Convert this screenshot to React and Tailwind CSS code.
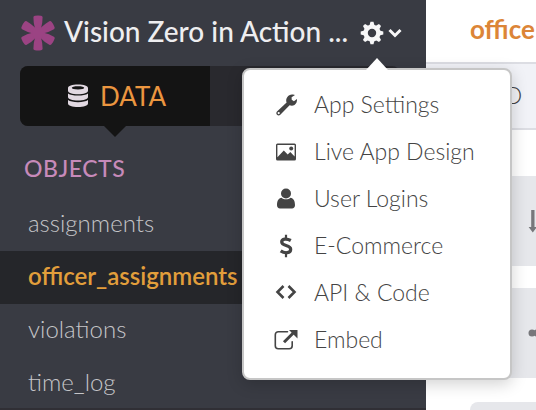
import React from 'react';

const menuItems = [
  { label: 'App Settings', Icon: WrenchIcon },
  { label: 'Live App Design', Icon: PhotoIcon },
  { label: 'User Logins', Icon: UserIcon },
  { label: 'E-Commerce', Icon: DollarIcon },
  { label: 'API & Code', Icon: CodeIcon },
  { label: 'Embed', Icon: EmbedIcon },
];

const objects = ['assignments', 'officer_assignments', 'violations', 'time_log'];

function WrenchIcon() {
  return (
    <svg viewBox="0 0 24 24" className="size-6" fill="currentColor" aria-hidden="true">
      <path fillRule="evenodd" d="M18 1.500c1.300-.2 2.200 0 3 .5l-3.400 2.300.1 2.500 2.200 1.400L23 6.100c.2 2.600-.6 4.700-2.500 5.900-1.600 1-3.300 1-4.900.3L6.300 21.800c-1 .9-2.400.9-3.300 0s-.9-2.300 0-3.300l9.600-9c-.7-1.800-.5-3.700.6-5.300C14.400 2.500 16 1.700 18 1.500zM4.700 19a1.100 1.100 0 1 0 0 2.200 1.100 1.100 0 0 0 0-2.200z" />
    </svg>
  );
}

function PhotoIcon() {
  return (
    <svg viewBox="0 0 24 24" className="size-6" fill="currentColor" aria-hidden="true">
      <path fillRule="evenodd" d="M3.500 3.500h17A1.500 1.500 0 0 1 22 5v14a1.500 1.500 0 0 1-1.500 1.500h-17A1.500 1.500 0 0 1 2 19V5A1.500 1.500 0 0 1 3.500 3.500zM3.400 5v12.300l6.400-6.800 3.900 4.100 2.600-2.600 4.300 4.500V5z" />
      <circle cx="17.200" cy="8.500" r="2" />
    </svg>
  );
}

function UserIcon() {
  return (
    <svg viewBox="0 0 24 24" className="size-6" fill="currentColor" aria-hidden="true">
      <circle cx="12" cy="6.500" r="5" />
      <path d="M7.500 10.800C4.500 11.300 3 14 3 18.300 3 20.300 4.200 21.500 6 21.500h12c1.800 0 3-1.200 3-3.200 0-4.300-1.500-7-4.500-7.500-1.300 1-2.800 1.500-4.500 1.500s-3.200-.5-4.500-1.500z" />
    </svg>
  );
}

function DollarIcon() {
  return (
    <svg viewBox="0 0 24 24" className="size-6" fill="none" stroke="currentColor" strokeWidth="3.200" aria-hidden="true">
      <path d="M16.800 6.500C12.500 4.100 7.700 4.700 7.700 8c0 4.500 9 2.500 9 7.200 0 4-5.700 4.700-10 1.700" />
      <path strokeWidth="2.200" d="M12 .7V6M12 17.500v5.700" />
    </svg>
  );
}

function CodeIcon() {
  return (
    <svg viewBox="0 0 24 24" className="size-6" fill="none" stroke="currentColor" strokeWidth="2.600" aria-hidden="true">
      <path d="m9.500 5-6 6 6 6M14.500 5l6 6-6 6" />
    </svg>
  );
}

function EmbedIcon() {
  return (
    <svg viewBox="0 0 24 24" className="size-6" fill="none" stroke="currentColor" aria-hidden="true">
      <path strokeWidth="1.600" strokeLinecap="round" d="M13.500 3.700H4.300A3 3 0 0 0 1.300 6.700v11a3 3 0 0 0 3 3h10.900a3 3 0 0 0 3-3v-4" />
      <path strokeWidth="3" d="m10 14.300 9-9" />
      <path fill="currentColor" stroke="none" d="M15 2h8.500v8.600z" />
    </svg>
  );
}

function AsteriskLogo() {
  return (
    <svg viewBox="0 0 34 36" className="h-9 w-[34px] shrink-0" fill="#9b4383" aria-hidden="true">
      {[0, 60, 120, 180, 240, 300].map((angle) => (
        <path key={angle} transform={`rotate(${angle} 17 18)`} d="M12.400 2.300Q12.400.9 14 .7q3-.6 6 0 1.600.2 1.600 1.600 0 5.700-1.500 10.700L17 19l-3.100-6Q12.400 8 12.400 2.300z" />
      ))}
      <circle cx="17" cy="18" r="6" />
    </svg>
  );
}

function GearIcon() {
  return (
    <svg viewBox="0 0 24 24" className="size-6" fill="#f7f7f8" aria-hidden="true">
      {[0, 45, 90, 135, 180, 225, 270, 315].map((angle) => (
        <path key={angle} transform={`rotate(${angle} 12 12)`} d="M10.500.7h3l1.300 4.800H9.200z" />
      ))}
      <path fillRule="evenodd" d="M12 3.400a8.600 8.600 0 1 1 0 17.200 8.600 8.600 0 0 1 0-17.200zm0 4.400a4.200 4.200 0 1 0 0 8.400 4.200 4.200 0 0 0 0-8.400z" />
    </svg>
  );
}

function DatabaseIcon() {
  return (
    <svg viewBox="0 0 20 24" className="h-6 w-5" fill="#e2d9e2" aria-hidden="true">
      <path fillRule="evenodd" d="M10 .5c5.800 0 10 1.500 10 3.500v2.700c0 2-4.200 3.500-10 3.500S0 8.700 0 6.700V4C0 2 4.200.5 10 .5zm0 1.700c-3.900 0-6.200.7-6.200 1.600S6.100 5.400 10 5.400s6.200-.7 6.200-1.600S13.900 2.200 10 2.200z" />
      <path d="M0 9.400c2 1.400 5.600 2.200 10 2.200s8-.8 10-2.200v3.700c0 2-4.200 3.500-10 3.500S0 15.100 0 13.100z" />
      <path d="M0 16c2 1.400 5.600 2.200 10 2.200s8-.8 10-2.200v3.500c0 2.100-4.200 3.600-10 3.600S0 21.600 0 19.500z" />
    </svg>
  );
}

function SettingsMenu() {
  return (
    <div className="absolute top-[68px] left-[242px] z-10 w-[270px] rounded-lg border-2 border-[#c6c6c6] bg-white pt-[11px] pb-[15px] shadow-[0_4px_16px_rgba(0,0,0,0.18)]">
      <svg viewBox="0 0 22 12" className="absolute -top-[12px] left-[122px] h-3 w-[22px]" aria-hidden="true">
        <path d="M0 12 11 0l11 12z" fill="#fff" />
      </svg>
      <ul>
        {menuItems.map(({ label, Icon }) => (
          <li key={label}>
            <button className="flex h-[47px] w-full items-center gap-4 pl-[30px] text-left text-[23px] font-light text-[#444]">
              <Icon />
              {label}
            </button>
          </li>
        ))}
      </ul>
    </div>
  );
}

function Sidebar() {
  return (
    <aside className="relative w-[426px] shrink-0 border-b-2 border-[#302f35] bg-[#393b43]">
      <header className="flex h-[66px] items-center pl-[21px]">
        <AsteriskLogo />
        <h1 className="ml-[9px] pb-1 text-[28px] font-medium whitespace-nowrap text-[#eeeef0]">Vision Zero in Action ...</h1>
        <button aria-label="App menu" className="ml-3 flex items-center gap-1">
          <GearIcon />
          <svg viewBox="0 0 14 10" className="h-[10px] w-[14px]" fill="none" stroke="#f7f7f8" strokeWidth="3" aria-hidden="true">
            <path d="m1.500 2 5.500 5.500L12.500 2" />
          </svg>
        </button>
      </header>
      <nav className="ml-5 flex h-[60px] w-[380px] rounded-lg bg-[#29292e]">
        <button className="relative flex w-[190px] items-center justify-center gap-3 rounded-l-lg bg-[#141414] pl-1 text-[26px] text-[#eb9640]">
          <DatabaseIcon />
          DATA
          <svg viewBox="0 0 22 11" className="absolute top-full left-[84px] h-[11px] w-[22px]" aria-hidden="true">
            <path d="M0 0h22L11 11z" fill="#141414" />
          </svg>
        </button>
      </nav>
      <h2 className="mt-6 pl-6 text-[23px] leading-9 font-medium tracking-wide text-[#c78aba]">OBJECTS</h2>
      <ul className="mt-3">
        {objects.map((name) => (
          <li key={name}>
            <a
              href="#"
              className={
                name === 'officer_assignments'
                  ? 'flex h-[53px] items-center bg-[#25262a] pb-1 pl-7 text-2xl font-semibold text-[#e29e3b]'
                  : 'flex h-[53px] items-center pb-1 pl-7 text-2xl font-light text-[#c5c5c8]'
              }
            >
              {name}
            </a>
          </li>
        ))}
      </ul>
    </aside>
  );
}

function MainPanel() {
  return (
    <main className="min-w-0 flex-1 overflow-hidden bg-white">
      <h2 className="flex h-16 items-center border-b-2 border-[#dcdde3] pb-1 pl-11 text-[26px] font-bold whitespace-nowrap text-[#dc8537]">
        office
      </h2>
      <div className="flex h-[66px] items-center border-b-2 border-[#dcdde3] bg-[#f1f2f7] pb-0.5 pl-[78px] text-2xl font-light text-[#444]">
        D
      </div>
      <div className="mt-[46px] ml-11 flex flex-col gap-[22px]">
        <div className="flex h-[90px] items-center rounded-l-lg bg-[#e6e7eb] pl-[58px]">
          <svg viewBox="0 0 14 24" className="h-6 w-[14px] shrink-0" fill="#77777b" aria-hidden="true">
            <path d="M3.200 1h3.300v17H9l-4.200 5.500L.6 18h2.600z" />
          </svg>
        </div>
        <div className="flex h-[90px] items-center rounded-l-lg bg-[#e6e7eb] pl-[58px]">
          <svg viewBox="0 0 14 8" className="h-2 w-[14px] shrink-0" fill="#77777b" aria-hidden="true">
            <circle cx="4" cy="4" r="3.500" />
            <circle cx="9" cy="4" r="3.500" />
          </svg>
        </div>
        <div className="mt-0.5 h-[90px] rounded-l-lg bg-[#e6e7eb]" />
      </div>
    </main>
  );
}

export default function App() {
  return (
    <div className="relative flex h-screen overflow-hidden bg-white font-[Lato,sans-serif]">
      <Sidebar />
      <MainPanel />
      <SettingsMenu />
    </div>
  );
}
